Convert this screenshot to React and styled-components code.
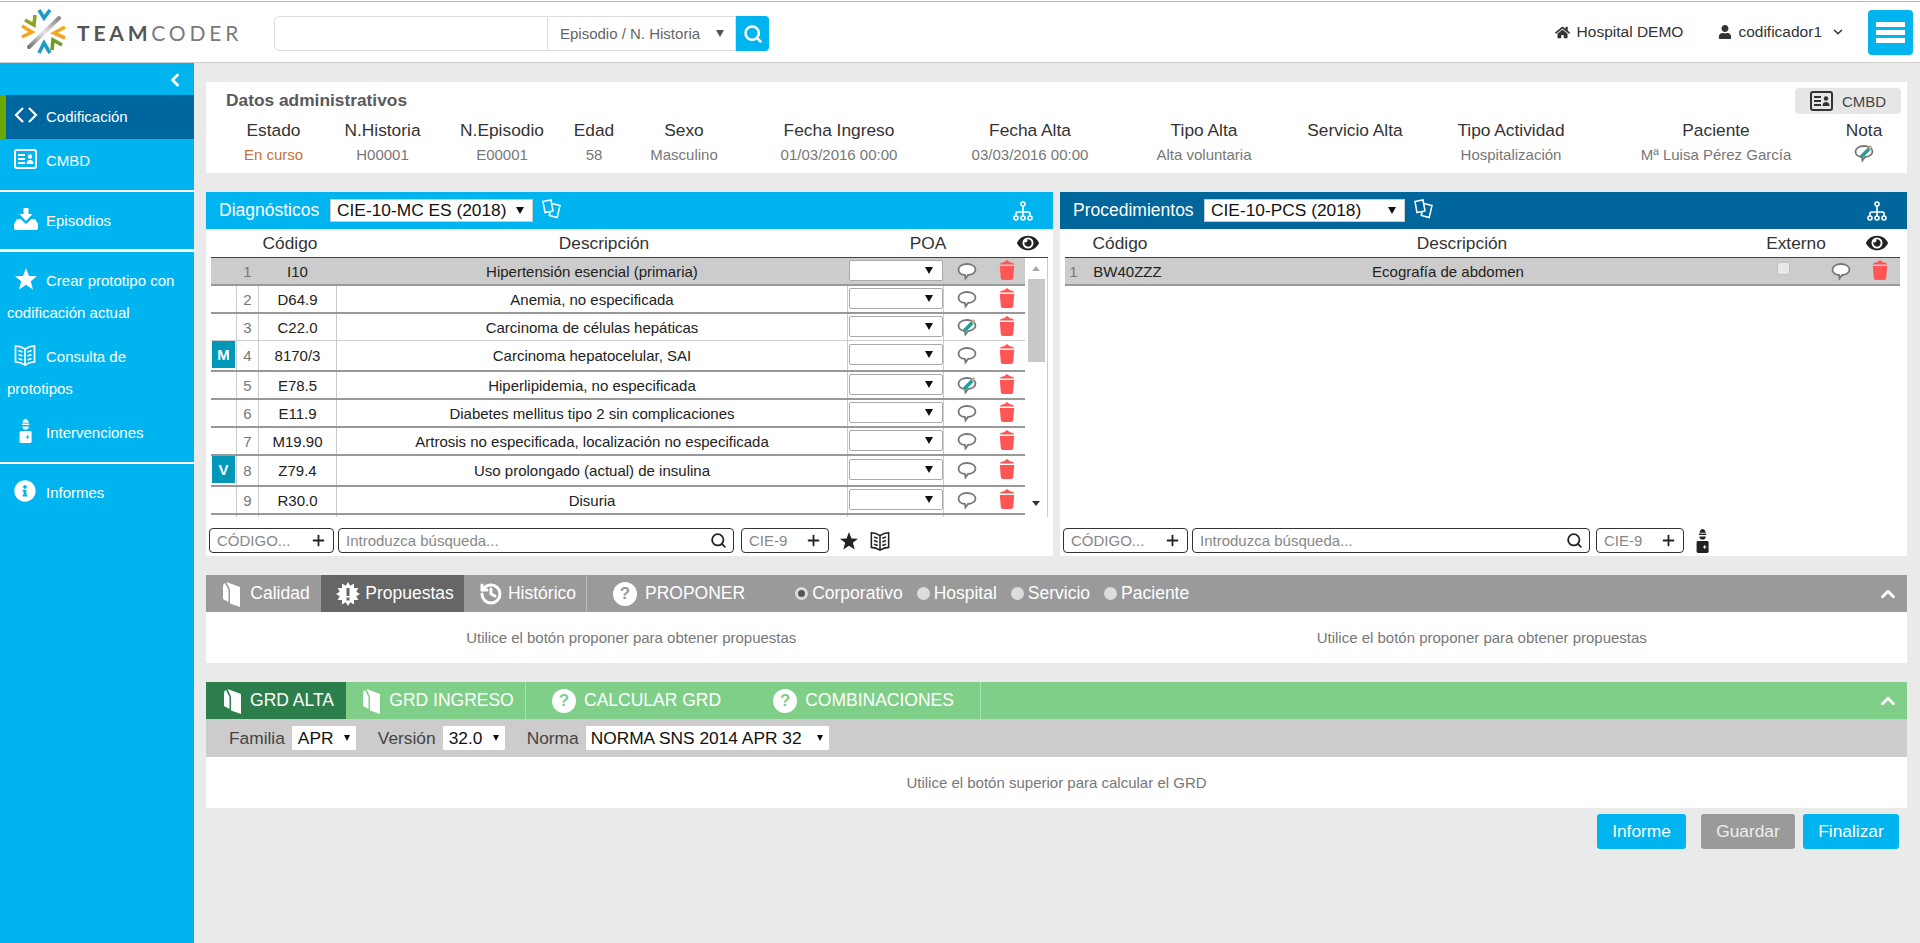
import styled, { createGlobalStyle } from 'styled-components';
import { ChevronLeft, ChevronDown, ChevronUp, History, Plus, Search as SearchIcon } from 'lucide-react';
import { FaEye, FaHome, FaInfoCircle, FaUser } from 'react-icons/fa';

const GlobalStyle = createGlobalStyle`
    html, body {
        margin: 0;
        padding: 0;
        background: #FFF;
    }
    * {
        box-sizing: border-box;
    }
    body {
        font-family: "Liberation Sans", Arial, sans-serif;
        color: #333;
    }
`;

const BLUE = '#00B5EF';

const Page = styled.div`
    width: 1920px;
    height: 943px;
    padding-top: 1px;
    overflow: hidden;
    display: flex;
    flex-flow: column;
`;
const Header = styled.header`
    height: 62px;
    flex: none;
    display: flex;
    align-items: center;
    padding: 0 7px 0 17px;
    background: #FFF;
    border-top: 1px solid #BBB;
    border-bottom: 1px solid #CCC;
`;
const Logo = styled.div`
    width: 257px;
    flex: none;
    display: flex;
    align-items: center;
    gap: 2px;
`;
const Wordmark = styled.span`
    font-family: Lato, sans-serif;
    font-size: 21px;
    letter-spacing: 3.8px;
    color: #7A7A7A;
    font-weight: 400;

    b {
        font-weight: 700;
        color: #555;
    }
`;
const SearchForm = styled.div`
    display: flex;
    height: 35px;
    margin-top: 3px;
`;
const SearchText = styled.input`
    width: 274px;
    border: 1px solid #DDD;
    border-radius: 5px 0 0 5px;
    background: #FFF;
    outline: none;
`;
const SearchKind = styled.div`
    width: 188px;
    display: flex;
    align-items: center;
    justify-content: space-between;
    padding: 0 11px 0 12px;
    font-size: 15px;
    color: #666;
    border: 1px solid #DDD;
    border-left: 0;
`;
const SearchButton = styled.div`
    width: 33px;
    display: flex;
    align-items: center;
    justify-content: center;
    color: #FFF;
    background: ${BLUE};
    border-radius: 0 4px 4px 0;
`;
const Triangle = styled.span`
    width: 0;
    height: 0;
    flex: none;
    border-left: ${props => props.$size || 4}px solid transparent;
    border-right: ${props => props.$size || 4}px solid transparent;
    border-top: ${props => (props.$size || 4) + 3}px solid ${props => props.$color || '#111'};
`;
const HeaderRight = styled.div`
    margin-left: auto;
    display: flex;
    align-items: center;
    font-size: 15.5px;
    color: #333;
`;
const HeaderLink = styled.span`
    display: flex;
    align-items: center;
    gap: ${props => props.$gap}px;
    margin-right: ${props => props.$right}px;
`;
const MenuButton = styled.div`
    width: 45px;
    height: 45px;
    display: flex;
    flex-flow: column;
    justify-content: center;
    gap: 3px;
    padding: 0 8px;
    background: ${BLUE};
    border-radius: 4px;

    span {
        height: 5px;
        background: #FFF;
    }
`;
const Body = styled.div`
    flex: 1;
    display: flex;
    min-height: 0;
    background: #EAEAEA;
`;
const Sidebar = styled.nav`
    width: 194px;
    flex: none;
    background: ${BLUE};
    color: #FFF;
    font-size: 15px;
`;
const Collapse = styled.div`
    height: 32px;
    display: flex;
    align-items: center;
    justify-content: flex-end;
    padding: 2px 9px 0 0;
`;
const NavGroup = styled.div`
    padding: ${props => props.$top || 0}px 0 ${props => props.$bottom || 7}px;
    border-bottom: ${props => props.$line || 0}px solid #FFF;
`;
const NavItem = styled.div`
    padding: 6px 4px 6px ${props => props.$active ? 1 : 7}px;
    line-height: 32px;
    background: ${props => props.$active ? '#00679E' : 'transparent'};
    border-left: ${props => props.$active ? '6px solid #6AA800' : '0'};
`;
const NavIcon = styled.span`
    display: inline-block;
    width: 39px;
    padding-left: ${props => props.$left || 7}px;
    vertical-align: middle;
    line-height: 0;
    position: relative;
    top: -3px;
`;
const Main = styled.main`
    flex: 1;
    min-width: 0;
    padding: 19px 13px 0 12px;
    display: flex;
    flex-flow: column;
`;
const AdminPanel = styled.section`
    height: 91px;
    padding: 6px 6px 0 15px;
    background: #FFF;
`;
const AdminTop = styled.div`
    height: 26px;
    display: flex;
    align-items: center;
    justify-content: space-between;
`;
const AdminTitle = styled.h2`
    margin: 0 0 2px;
    padding-left: 5px;
    font-size: 17.33px;
    font-weight: 700;
    color: #5A5A5A;
`;
const CmbdButton = styled.div`
    width: 106px;
    height: 26px;
    display: flex;
    align-items: center;
    gap: 9px;
    padding-left: 15px;
    font-size: 15px;
    color: #444;
    background: #E6E6E6;
    border-radius: 4px;
`;
const AdminGrid = styled.div`
    margin-top: 6px;
    display: grid;
    grid-template-columns: 105px 113px 126px 58px 122px 188px 194px 154px 148px 164px 246px 50px;
    text-align: center;
`;
const AdminLabel = styled.div`
    font-size: 17.33px;
    line-height: 20px;
    color: #333;
`;
const AdminValue = styled.div`
    margin-top: 4px;
    font-size: 15px;
    line-height: 22px;
    color: ${props => props.$color || '#777'};
`;
const Panels = styled.div`
    margin-top: 19px;
    display: grid;
    grid-template-columns: minmax(0, 1fr) minmax(0, 1fr);
    gap: 7px;
`;
const Panel = styled.section`
    height: 364px;
    background: #FFF;
    display: flex;
    flex-flow: column;
`;
const PanelHead = styled.div`
    height: 37px;
    flex: none;
    display: flex;
    align-items: center;
    padding: 0 20px 0 13px;
    color: #FFF;
    font-size: 17.5px;
    background: ${props => props.$color};
`;
const PanelTitle = styled.span`
    width: ${props => props.$w}px;
`;
const Pick = styled.div`
    width: ${props => props.$w}px;
    height: ${props => props.$h || 23}px;
    flex: none;
    display: flex;
    align-items: center;
    justify-content: space-between;
    padding: 0 ${props => props.$right || 8}px 0 ${props => props.$left || 6}px;
    font-size: 17.33px;
    color: #111;
    white-space: nowrap;
    background: #FFF;
    border: 1px solid ${props => props.$border || '#CCC'};
    border-radius: ${props => props.$radius || 0}px;
`;
const HeadIcon = styled.span`
    margin: -4px 0 0 8px;
    line-height: 0;
`;
const HeadRight = styled.span`
    margin-left: auto;
    line-height: 0;
`;
const TableHead = styled.div`
    height: 28px;
    flex: none;
    margin: 0 ${props => props.$margin}px 0 5px;
    display: grid;
    grid-template-columns: ${props => props.$cols};
    align-items: center;
    text-align: center;
    font-size: 17.33px;
    color: #333;
`;
const List = styled.div`
    height: 260px;
    flex: none;
    margin: 0 ${props => props.$margin}px 0 5px;
    display: flex;
    border-top: 1px solid #444;
    overflow: hidden;
`;
const Rows = styled.div`
    flex: 1;
    min-width: 0;
`;
const Row = styled.div`
    display: grid;
    grid-template-columns: ${props => props.$cols};
    min-height: ${props => props.$light ? 27 : 28}px;
    font-size: 15px;
    color: #222;
    background: ${props => props.$selected ? '#CCC' : '#FFF'};
    border-bottom: ${props => props.$light ? '1px solid #CCC' : '2px solid #999'};
`;
const Cell = styled.div`
    display: flex;
    align-items: center;
    justify-content: center;
    min-width: 0;
    white-space: nowrap;
    padding-bottom: ${props => props.$lift || 0}px;
    color: ${props => props.$color || 'inherit'};
    border-right: 1px solid ${props => props.$plain ? 'transparent' : '#CCC'};
`;
const Badge = styled.div`
    width: 23px;
    height: 27px;
    margin-bottom: 2px;
    display: flex;
    align-items: center;
    justify-content: center;
    font-size: 15px;
    font-weight: 700;
    color: #FFF;
    background: #0097B8;
`;
const Scrollbar = styled.div`
    width: 23px;
    flex: none;
    display: flex;
    flex-flow: column;
    align-items: center;
    padding-top: 21px;
    background: #FFF;
    border-right: 1px solid #CCC;
    position: relative;
`;
const ScrollArrow = styled.span`
    position: absolute;
    left: 7px;
    top: ${props => props.$top}px;
    width: 0;
    height: 0;
    border-left: 4.5px solid transparent;
    border-right: 4.5px solid transparent;
    ${props => props.$up ? 'border-bottom: 5px solid #AAA;' : 'border-top: 5px solid #333;'}
`;
const ScrollThumb = styled.div`
    width: 17px;
    height: 83px;
    background: #C8C8C8;
`;
const Toolbar = styled.div`
    margin-top: 11px;
    padding-left: 3px;
    height: 25px;
    display: flex;
    align-items: center;
`;
const Field = styled.label`
    width: ${props => props.$w}px;
    height: 25px;
    flex: none;
    margin-right: ${props => props.$right}px;
    display: flex;
    align-items: center;
    padding: 0 6px 0 7px;
    color: #222;
    background: #FFF;
    border: 1px solid #333;
    border-radius: 4px;
`;
const FieldInput = styled.input`
    flex: 1;
    min-width: 0;
    padding: 0;
    border: 0;
    outline: none;
    font-family: inherit;
    font-size: 15px;
    background: transparent;

    &::placeholder {
        color: #888;
        opacity: 1;
    }
`;
const ToolIcon = styled.span`
    margin-left: ${props => props.$left}px;
    color: #222;
    line-height: 0;
`;
const Block = styled.section`
    margin-top: 19px;
    background: #FFF;
`;
const TabBar = styled.div`
    height: 37px;
    display: flex;
    align-items: stretch;
    color: #FFF;
    font-size: 17.5px;
    background: ${props => props.$color};
`;
const Tab = styled.div`
    width: ${props => props.$w}px;
    flex: none;
    display: flex;
    align-items: center;
    justify-content: center;
    gap: ${props => props.$gap || 6}px;
    padding-left: 5px;
    background: ${props => props.$active || 'transparent'};
    border-right: ${props => props.$line ? '1px solid rgba(255,255,255,0.35)' : '0'};
`;
const TabAction = styled.div`
    display: flex;
    align-items: center;
    gap: 8px;
    padding: 0 26px;
`;
const ActionsEnd = styled.div`
    display: flex;
    border-right: 1px solid rgba(255,255,255,0.35);
`;
const Help = styled.span`
    width: 24px;
    height: 24px;
    flex: none;
    display: flex;
    align-items: center;
    justify-content: center;
    font-size: 17px;
    font-weight: 700;
    color: ${props => props.$color};
    background: #FFF;
    border-radius: 50%;
`;
const Radios = styled.div`
    margin-left: 24px;
    display: flex;
    align-items: center;
    gap: 14px;
`;
const Radio = styled.span`
    display: flex;
    align-items: center;
    gap: 4px;

    i {
        width: 13px;
        height: 13px;
        border-radius: 50%;
        background: ${props => props.$checked ? '#555' : '#DDD'};
        border: ${props => props.$checked ? '3px solid #DDD' : '0'};
    }
`;
const BarEnd = styled.span`
    margin-left: auto;
    padding-right: 8px;
    display: flex;
    align-items: center;
`;
const Messages = styled.div`
    height: 51px;
    display: grid;
    grid-template-columns: repeat(${props => props.$cols || 1}, 1fr);
    align-items: center;
    text-align: center;
    font-size: 15px;
    color: #777;
`;
const GrdFilters = styled.div`
    height: 38px;
    display: flex;
    align-items: center;
    padding-left: 23px;
    font-size: 17.33px;
    color: #444;
    background: #CCC;
`;
const FilterLabel = styled.span`
    margin: 0 ${props => props.$gap || 6}px 0 ${props => props.$left || 0}px;
`;
const Actions = styled.div`
    margin-top: 6px;
    padding-right: 8px;
    display: flex;
    justify-content: flex-end;
`;
const ActionButton = styled.div`
    width: ${props => props.$w}px;
    height: 35px;
    margin-left: ${props => props.$left}px;
    display: flex;
    align-items: center;
    justify-content: center;
    font-size: 17.33px;
    color: ${props => props.$off ? '#EEE' : '#FFF'};
    background: ${props => props.$off ? '#9A9A9A' : BLUE};
    border-radius: 3px;
`;

function LogoMark() {
    const chevrons = [
        ['M24 5l5 8 6-8', '#1C9BC8'],
        ['M10 15l9 5 1-10', '#8AA51E'],
        ['M7 21l10 6-10 5', '#F5A623'],
        ['M50 22l-11 6 11 5', '#F5A623'],
        ['M24 48l5-10 6 10', '#1C9BC8'],
        ['M37 45l1-10 9 5', '#6E9A2A'],
    ];
    return (
        <svg width="60" height="55" viewBox="0 0 60 55" style={{ flex: 'none', marginLeft: -2 }}>
            <defs>
                <linearGradient id="logoBar" x1="0" y1="1" x2="1" y2="0">
                    <stop offset="0" stopColor="#777" />
                    <stop offset="0.5" stopColor="#E6E6E6" />
                    <stop offset="1" stopColor="#888" />
                </linearGradient>
            </defs>
            <path d="M14 42L44 13" stroke="url(#logoBar)" strokeWidth="4" strokeLinecap="round" fill="none" />
            {chevrons.map(([d, color]) => (
                <path key={d + color} d={d} stroke={color} strokeWidth="3.6" fill="none" />
            ))}
        </svg>
    );
}

function CardIcon({ color = '#FFF', size = 23 }) {
    return (
        <svg width={size} height={size * 0.87} viewBox="0 0 23 20" fill="none">
            <rect x="1" y="1" width="21" height="18" rx="2" stroke={color} strokeWidth="2" />
            <path d="M4 6h7M4 10h7M4 14h7" stroke={color} strokeWidth="2" />
            <circle cx="16" cy="7.5" r="2.2" fill={color} />
            <path d="M12.5 15c0-3 1.5-4 3.500-4s3.500 1 3.500 4z" fill={color} />
        </svg>
    );
}

function CodeIcon() {
    return (
        <svg width="24" height="16" viewBox="0 0 24 16" fill="none" stroke="#FFF" strokeWidth="2.2">
            <path d="M9 1L2 8l7 7M15 1l7 7-7 7" />
        </svg>
    );
}

function TrayIcon() {
    return (
        <svg width="24" height="22" viewBox="0 0 24 22" fill="#FFF">
            <path d="M9.500 0h5v6h4l-6.500 7-6.500-7h4z" />
            <path d="M3 11h3.500l5.500 5 5.500-5H21l3 5v4a2 2 0 0 1-2 2H2a2 2 0 0 1-2-2v-4z" />
        </svg>
    );
}

function StarIcon({ color = '#FFF', size = 22 }) {
    return (
        <svg width={size} height={size} viewBox="0 0 22 22" fill={color}>
            <polygon points="11,0 14,8 22,8.200 15.700,13.200 18,21.500 11,16.700 4,21.500 6.300,13.200 0,8.200 8,8" />
        </svg>
    );
}

function BookIcon({ color = '#FFF', size = 22 }) {
    return (
        <svg width={size} height={size} viewBox="0 0 22 22" fill="none" stroke={color} strokeWidth="1.700">
            <path d="M11 5C8 3 5 2 1.500 2v16c3.500 0 6.500 1 9.500 3 3-2 6-3 9.500-3V2C17 2 14 3 11 5z" />
            <path d="M11 5v16M4.500 6.500l4 1.500M4.500 10.500l4 1.500M4.500 14.500l4 1.500M17.500 6.500l-4 1.500M17.500 10.500l-4 1.500M17.500 14.500l-4 1.500" />
        </svg>
    );
}

function DoctorIcon({ color = '#FFF', cross = BLUE, size = 24 }) {
    return (
        <svg width={size * 0.55} height={size} viewBox="0 0 14 26" fill={color}>
            <path d="M3.500 4C4 1.500 5.500 0 7 0s3 1.500 3.500 4z" />
            <path d="M3 5h8v1.500H3z" />
            <path d="M3.500 8h7c0 2-1.500 3.500-3.500 3.500S3.500 10 3.500 8z" />
            <rect x="0.500" y="13" width="13" height="13" rx="1.500" />
            <path d="M7.500 19.500h3.500M9.250 17.700v3.600" stroke={cross} strokeWidth="1.100" />
        </svg>
    );
}

function BubbleIcon({ edited }) {
    return (
        <svg width="20" height="19" viewBox="0 0 20 19" fill="none">
            <path d="M10 2c5 0 8.500 2.500 8.500 5.500S15 13 11 13l-2.500 3.500L8 13C4 12.800 1.500 10.500 1.500 7.500S5 2 10 2z" stroke="#777" strokeWidth="1.800" fill="#FFF" />
            {edited && <path d="M6 11.500L14 3.500l2.500 2.500-8 8z" fill="#1F9E96" />}
            {edited && <path d="M14.500 3l2-2 1.500 1.500-1.500 2.500z" fill="#C9A98B" />}
        </svg>
    );
}

function TrashIcon() {
    return (
        <svg width="16" height="20" viewBox="0 0 16 20" fill="#FF5555">
            <path d="M8 0l3 2.200c2 .3 4 1 4.500 2.300H.5C1 3.200 3 2.500 5 2.200z" />
            <path d="M.8 6h14.400l-1 12c-.1 1.200-1 2-2.200 2H4c-1.200 0-2.100-.8-2.200-2z" />
        </svg>
    );
}

function DocsIcon() {
    return (
        <svg width="21" height="20" viewBox="0 0 21 20" fill="none" stroke="#FFF" strokeWidth="1.500">
            <path d="M2 2.500L10 1l2 11-8 1.500z" />
            <path d="M11 4.500l8 2-2.800 12-8-2 1-3.500" />
        </svg>
    );
}

function TreeIcon() {
    return (
        <svg width="20" height="20" viewBox="0 0 20 20" fill="none" stroke="#FFF" strokeWidth="1.600">
            <circle cx="10" cy="3" r="2" />
            <circle cx="3" cy="17" r="2" />
            <circle cx="10" cy="17" r="2" />
            <circle cx="17" cy="17" r="2" />
            <path d="M10 5v10M3 15v-2.500c0-1 1-1.500 2-1.500h10c1 0 2 .5 2 1.500V15" />
        </svg>
    );
}

function CoverIcon() {
    return (
        <svg width="19" height="26" viewBox="0 0 19 26" fill="#FFF">
            <path d="M4.500 1L18 6v20L8 22.500V8.500z" />
            <path d="M1 5.500Q1 2.500 3 2L6.500 9v12L1 18z" />
        </svg>
    );
}

function BurstIcon({ cut }) {
    const points = [];
    for (let i = 0; i < 24; i++) {
        const radius = i % 2 === 0 ? 12 : 8.5;
        const angle = (i * Math.PI) / 12;
        points.push(`${12 + radius * Math.sin(angle)},${12 - radius * Math.cos(angle)}`);
    }
    return (
        <svg width="24" height="24" viewBox="0 0 24 24">
            <polygon points={points.join(' ')} fill="#FFF" />
            <rect x="10.500" y="6" width="3" height="8" fill={cut} />
            <rect x="10.500" y="15.500" width="3" height="3" fill={cut} />
        </svg>
    );
}

const DIAG_COLS = '26px 22px 78px 511px 96px 46px 35px';
const PROC_COLS = '18px 68px 595px 76px 38px 40px';

const diagnoses = [
    { n: 1, code: 'I10', text: 'Hipertensión esencial (primaria)', selected: true },
    { n: 2, code: 'D64.9', text: 'Anemia, no especificada' },
    { n: 3, code: 'C22.0', text: 'Carcinoma de células hepáticas', edited: true, light: true },
    { n: 4, code: '8170/3', text: 'Carcinoma hepatocelular, SAI', badge: 'M' },
    { n: 5, code: 'E78.5', text: 'Hiperlipidemia, no especificada', edited: true },
    { n: 6, code: 'E11.9', text: 'Diabetes mellitus tipo 2 sin complicaciones' },
    { n: 7, code: 'M19.90', text: 'Artrosis no especificada, localización no especificada' },
    { n: 8, code: 'Z79.4', text: 'Uso prolongado (actual) de insulina', badge: 'V' },
    { n: 9, code: 'R30.0', text: 'Disuria' },
];

const adminFields = [
    ['Estado', 'En curso', '#C87137'],
    ['N.Historia', 'H00001'],
    ['N.Episodio', 'E00001'],
    ['Edad', '58'],
    ['Sexo', 'Masculino'],
    ['Fecha Ingreso', '01/03/2016 00:00'],
    ['Fecha Alta', '03/03/2016 00:00'],
    ['Tipo Alta', 'Alta voluntaria'],
    ['Servicio Alta', ''],
    ['Tipo Actividad', 'Hospitalización'],
    ['Paciente', 'Mª Luisa Pérez García'],
];

function SearchTools({ code, search, children }) {
    return (
        <Toolbar>
            <Field $w={code} $right={4}>
                <FieldInput placeholder="CÓDIGO..." />
                <Plus size={17} strokeWidth={2.5} />
            </Field>
            <Field $w={search} $right={search > 396 ? 6 : 7}>
                <FieldInput placeholder="Introduzca búsqueda..." />
                <SearchIcon size={17} strokeWidth={2.5} />
            </Field>
            <Field $w={88} $right={0}>
                <FieldInput placeholder="CIE-9" />
                <Plus size={17} strokeWidth={2.5} />
            </Field>
            {children}
        </Toolbar>
    );
}

function App() {
    return (
        <Page>
            <GlobalStyle />
            <Header>
                <Logo>
                    <LogoMark />
                    <Wordmark><b>TEAM</b>CODER</Wordmark>
                </Logo>
                <SearchForm>
                    <SearchText />
                    <SearchKind>
                        Episodio / N. Historia
                        <Triangle $color="#555" />
                    </SearchKind>
                    <SearchButton><SearchIcon size={20} strokeWidth={3} /></SearchButton>
                </SearchForm>
                <HeaderRight>
                    <HeaderLink $gap={7} $right={35}><FaHome size={15} />Hospital DEMO</HeaderLink>
                    <HeaderLink $gap={6} $right={9}><FaUser size={14} />codificador1</HeaderLink>
                    <ChevronDown size={14} strokeWidth={2.5} style={{ marginRight: 23 }} />
                    <MenuButton><span /><span /><span /></MenuButton>
                </HeaderRight>
            </Header>
            <Body>
                <Sidebar>
                    <NavGroup $line={2}>
                        <Collapse><ChevronLeft size={20} strokeWidth={3.5} /></Collapse>
                        <NavItem $active><NavIcon><CodeIcon /></NavIcon>Codificación</NavItem>
                        <NavItem><NavIcon><CardIcon /></NavIcon>CMBD</NavItem>
                    </NavGroup>
                    <NavGroup $top={7} $bottom={6} $line={3}>
                        <NavItem><NavIcon><TrayIcon /></NavIcon>Episodios</NavItem>
                    </NavGroup>
                    <NavGroup $top={7} $line={2}>
                        <NavItem><NavIcon $left={8}><StarIcon /></NavIcon>Crear prototipo con codificación actual</NavItem>
                        <NavItem><NavIcon><BookIcon /></NavIcon>Consulta de prototipos</NavItem>
                        <NavItem><NavIcon $left={12}><DoctorIcon /></NavIcon>Intervenciones</NavItem>
                    </NavGroup>
                    <NavGroup $top={7}>
                        <NavItem><NavIcon><FaInfoCircle size={22} /></NavIcon>Informes</NavItem>
                    </NavGroup>
                </Sidebar>
                <Main>
                    <AdminPanel>
                        <AdminTop>
                            <AdminTitle>Datos administrativos</AdminTitle>
                            <CmbdButton><CardIcon color="#333" />CMBD</CmbdButton>
                        </AdminTop>
                        <AdminGrid>
                            {adminFields.map(([label, value, color]) => (
                                <div key={label}>
                                    <AdminLabel>{label}</AdminLabel>
                                    <AdminValue $color={color}>{value}</AdminValue>
                                </div>
                            ))}
                            <div>
                                <AdminLabel>Nota</AdminLabel>
                                <AdminValue><BubbleIcon edited /></AdminValue>
                            </div>
                        </AdminGrid>
                    </AdminPanel>
                    <Panels>
                        <Panel>
                            <PanelHead $color={BLUE}>
                                <PanelTitle $w={111}>Diagnósticos</PanelTitle>
                                <Pick $w={203}>CIE-10-MC ES (2018)<Triangle /></Pick>
                                <HeadIcon><DocsIcon /></HeadIcon>
                                <HeadRight><TreeIcon /></HeadRight>
                            </PanelHead>
                            <TableHead $margin={5} $cols="158px 470px 178px 31px">
                                <span>Código</span>
                                <span>Descripción</span>
                                <span>POA</span>
                                <FaEye size={22} color="#222" />
                            </TableHead>
                            <List $margin={5}>
                                <Rows>
                                    {diagnoses.map(item => (
                                        <Row key={item.n} $cols={DIAG_COLS} $selected={item.selected} $light={item.light}>
                                            <Cell $plain={item.selected}>{item.badge && <Badge>{item.badge}</Badge>}</Cell>
                                            <Cell $plain={item.selected} $color="#777">{item.n}</Cell>
                                            <Cell $plain={item.selected}>{item.code}</Cell>
                                            <Cell $plain={item.selected}>{item.text}</Cell>
                                            <Cell $plain={item.selected} $lift={2}>
                                                <Pick $w={94} $h={21} $border="#AAA" $radius={2} $right={9}>
                                                    <span />
                                                    <Triangle />
                                                </Pick>
                                            </Cell>
                                            <Cell $plain><BubbleIcon edited={item.edited} /></Cell>
                                            <Cell $plain $lift={3}><TrashIcon /></Cell>
                                        </Row>
                                    ))}
                                    <Row $cols={DIAG_COLS}>
                                        <Cell /><Cell /><Cell /><Cell /><Cell /><Cell $plain /><Cell $plain />
                                    </Row>
                                </Rows>
                                <Scrollbar>
                                    <ScrollArrow $up $top={8} />
                                    <ScrollThumb />
                                    <ScrollArrow $top={243} />
                                </Scrollbar>
                            </List>
                            <SearchTools code={125} search={396}>
                                <ToolIcon $left={11}><StarIcon color="#222" size={18} /></ToolIcon>
                                <ToolIcon $left={12}><BookIcon color="#222" size={20} /></ToolIcon>
                            </SearchTools>
                        </Panel>
                        <Panel>
                            <PanelHead $color="#00669B">
                                <PanelTitle $w={131}>Procedimientos</PanelTitle>
                                <Pick $w={201}>CIE-10-PCS (2018)<Triangle /></Pick>
                                <HeadIcon><DocsIcon /></HeadIcon>
                                <HeadRight><TreeIcon /></HeadRight>
                            </PanelHead>
                            <TableHead $margin={7} $cols="110px 574px 94px 23px 34px">
                                <span>Código</span>
                                <span>Descripción</span>
                                <span>Externo</span>
                                <span />
                                <FaEye size={22} color="#222" />
                            </TableHead>
                            <List $margin={7}>
                                <Rows>
                                    <Row $selected $cols={PROC_COLS}>
                                        <Cell $plain $color="#777">1</Cell>
                                        <Cell $plain><span style={{ marginLeft: 22 }}>BW40ZZZ</span></Cell>
                                        <Cell $plain>Ecografía de abdomen</Cell>
                                        <Cell $plain><input type="checkbox" disabled style={{ margin: '0 0 6px' }} /></Cell>
                                        <Cell $plain><BubbleIcon /></Cell>
                                        <Cell $plain $lift={3}><TrashIcon /></Cell>
                                    </Row>
                                </Rows>
                            </List>
                            <SearchTools code={125} search={398}>
                                <ToolIcon $left={12}><DoctorIcon color="#222" cross="#FFF" /></ToolIcon>
                            </SearchTools>
                        </Panel>
                    </Panels>
                    <Block>
                        <TabBar $color="#9A9A9A">
                            <Tab $w={115} $gap={9}><CoverIcon />Calidad</Tab>
                            <Tab $w={143} $gap={5} $active="#666"><BurstIcon cut="#666" />Propuestas</Tab>
                            <Tab $w={123} $gap={5} $line><History size={24} strokeWidth={3} />Histórico</Tab>
                            <TabAction><Help $color="#9A9A9A">?</Help>PROPONER</TabAction>
                            <Radios>
                                <Radio $checked><i />Corporativo</Radio>
                                <Radio><i />Hospital</Radio>
                                <Radio><i />Servicio</Radio>
                                <Radio><i />Paciente</Radio>
                            </Radios>
                            <BarEnd><ChevronUp size={22} strokeWidth={3} /></BarEnd>
                        </TabBar>
                        <Messages $cols={2}>
                            <span>Utilice el botón proponer para obtener propuestas</span>
                            <span>Utilice el botón proponer para obtener propuestas</span>
                        </Messages>
                    </Block>
                    <Block>
                        <TabBar $color="#80CF88">
                            <Tab $w={140} $gap={8} $active="#2C7F4B"><CoverIcon />GRD ALTA</Tab>
                            <Tab $w={180} $gap={8} $line><CoverIcon />GRD INGRESO</Tab>
                            <ActionsEnd>
                                <TabAction><Help $color="#80CF88">?</Help>CALCULAR GRD</TabAction>
                                <TabAction><Help $color="#80CF88">?</Help>COMBINACIONES</TabAction>
                            </ActionsEnd>
                            <BarEnd><ChevronUp size={22} strokeWidth={3} /></BarEnd>
                        </TabBar>
                        <GrdFilters>
                            <FilterLabel $gap={6}>Familia</FilterLabel>
                            <Pick $w={66} $h={26} $radius={2} $left={6} $right={6}>APR<Triangle $size={3} /></Pick>
                            <FilterLabel $left={21} $gap={6}>Versión</FilterLabel>
                            <Pick $w={64} $h={26} $radius={2} $left={6} $right={6}>32.0<Triangle $size={3} /></Pick>
                            <FilterLabel $left={21} $gap={6}>Norma</FilterLabel>
                            <Pick $w={245} $h={26} $radius={2} $left={5} $right={6}>NORMA SNS 2014 APR 32<Triangle $size={3} /></Pick>
                        </GrdFilters>
                        <Messages>
                            <span>Utilice el botón superior para calcular el GRD</span>
                        </Messages>
                    </Block>
                    <Actions>
                        <ActionButton $w={89} $left={0}>Informe</ActionButton>
                        <ActionButton $w={94} $left={15} $off>Guardar</ActionButton>
                        <ActionButton $w={96} $left={8}>Finalizar</ActionButton>
                    </Actions>
                </Main>
            </Body>
        </Page>
    );
}

export default App;
